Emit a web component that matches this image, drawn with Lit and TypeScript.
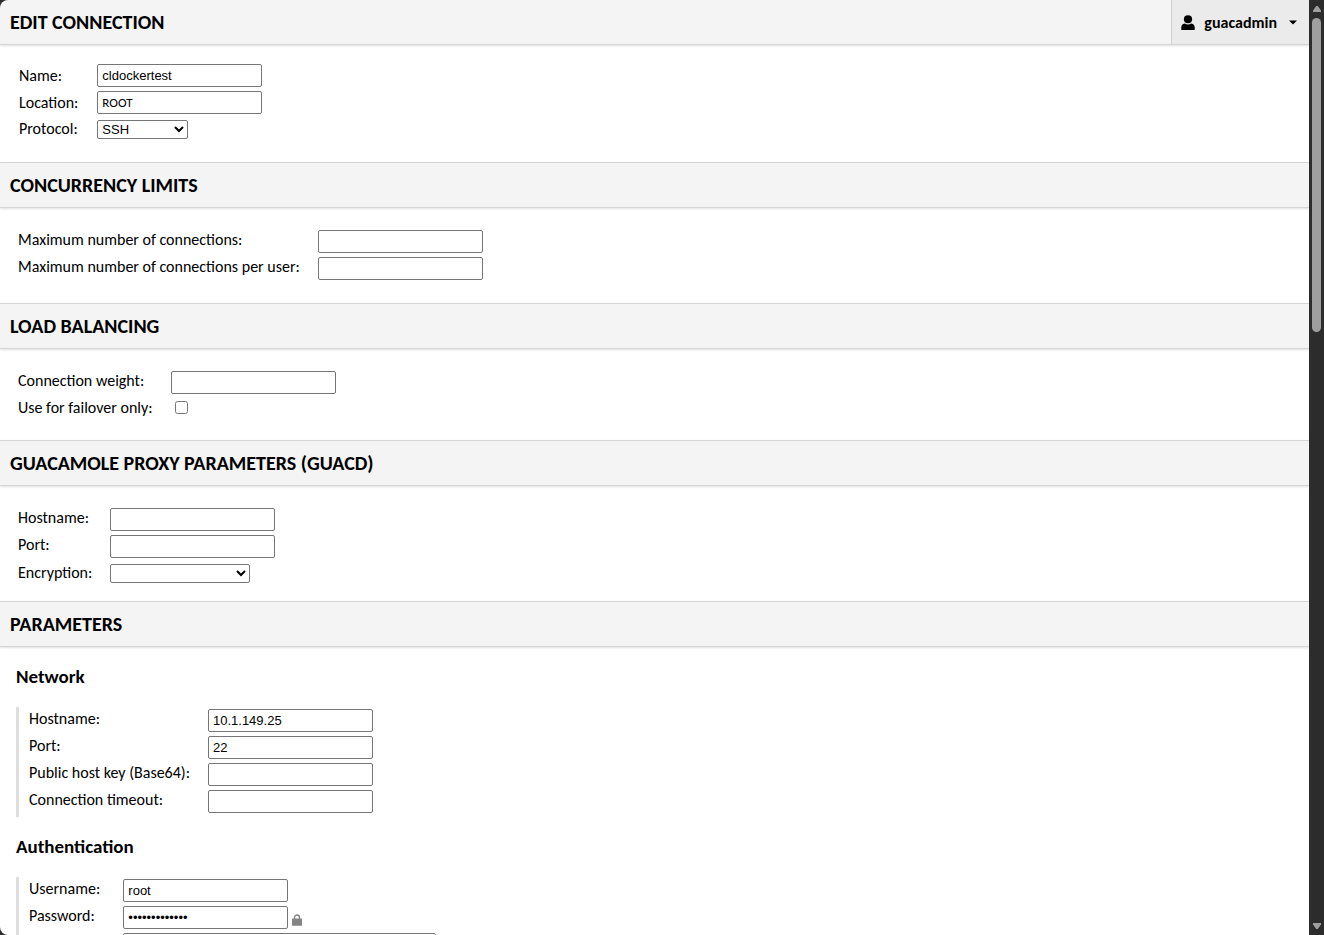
import { LitElement, html, css, nothing } from "lit";
import { customElement, property } from "lit/decorators.js";

type Kind = "text" | "password" | "location" | "select" | "checkbox" | "textarea";

interface Field {
  id: string;
  label: string;
  kind: Kind;
  value?: string;
  wide?: boolean;
}

const text = (id: string, label: string, value = ""): Field => ({ id, label, kind: "text", value });

const CONNECTION: Field[] = [
  text("name", "Name:", "cldockertest"),
  { id: "location", label: "Location:", kind: "location", value: "ROOT" },
  { id: "protocol", label: "Protocol:", kind: "select", value: "SSH" },
];

const CONCURRENCY: Field[] = [
  text("max-connections", "Maximum number of connections:"),
  text("max-connections-per-user", "Maximum number of connections per user:"),
];

const BALANCING: Field[] = [
  text("weight", "Connection weight:"),
  { id: "failover-only", label: "Use for failover only:", kind: "checkbox" },
];

const PROXY: Field[] = [
  text("guacd-hostname", "Hostname:"),
  text("guacd-port", "Port:"),
  { id: "guacd-encryption", label: "Encryption:", kind: "select", wide: true },
];

const NETWORK: Field[] = [
  text("hostname", "Hostname:", "10.1.149.25"),
  text("port", "Port:", "22"),
  text("host-key", "Public host key (Base64):"),
  text("timeout", "Connection timeout:"),
];

const AUTHENTICATION: Field[] = [
  text("username", "Username:", "root"),
  { id: "password", label: "Password:", kind: "password", value: "guacamole-ssh" },
  { id: "private-key", label: "Private key:", kind: "textarea" },
  text("passphrase", "Passphrase:"),
];

@customElement("field-grid")
export class FieldGrid extends LitElement {
  @property({ attribute: false }) fields: Field[] = [];
  @property({ type: Boolean, reflect: true }) centered = false;

  static styles = css`
    :host {
      display: grid;
      grid-template-columns: max-content max-content;
      justify-content: start;
      column-gap: 18px;
      row-gap: 4px;
      font: 16px/20px Carlito, Lato, sans-serif;
    }
    :host([centered]) {
      column-gap: 19px;
    }
    .row {
      display: grid;
      grid-column: 1 / -1;
      grid-template-columns: subgrid;
      align-items: start;
    }
    :host([centered]) .row,
    .row-select,
    .row-checkbox {
      align-items: center;
    }
    .row-select {
      padding-top: 1px;
    }
    .row-checkbox {
      line-height: 19px;
    }
    .row-textarea label {
      padding-top: 4px;
    }
    .control {
      display: flex;
      align-items: center;
      gap: 3px;
    }
    input,
    select,
    textarea {
      box-sizing: border-box;
      margin: 0;
      border: 1px solid #767676;
      border-radius: 2px;
      background-color: #fff;
      color: #000;
      font: 13px/19px "Liberation Sans", Arial, sans-serif;
    }
    .text {
      width: 165px;
      height: 23px;
      padding: 1px 4px;
    }
    .location {
      font: 13px/19px Carlito, Lato, sans-serif;
    }
    select {
      width: 91px;
      height: 19px;
      padding: 0;
      line-height: 17px;
    }
    select.wide {
      width: 140px;
    }
    input[type="checkbox"] {
      width: 13px;
      height: 13px;
      margin: 3px 4px;
    }
    textarea {
      display: block;
      width: 313px;
      height: 160px;
    }
    .lock {
      width: 12px;
      height: 12px;
      margin-top: 4px;
      border: 0;
      padding: 0;
      background: none;
      display: flex;
    }
  `;

  private control(f: Field) {
    switch (f.kind) {
      case "select":
        return html`<select id=${f.id} class=${f.wide ? "wide" : ""}>
          <option>${f.value ?? ""}</option>
        </select>`;
      case "checkbox":
        return html`<input id=${f.id} type="checkbox" />`;
      case "textarea":
        return html`<textarea id=${f.id}></textarea>`;
      case "location":
        return html`<input id=${f.id} class="text location" readonly .value=${f.value ?? ""} />`;
      default:
        return html`<input id=${f.id} class="text" type=${f.kind} .value=${f.value ?? ""} />`;
    }
  }

  render() {
    return this.fields.map(
      (f) => html`<div class="row row-${f.kind}">
        <label for=${f.id}>${f.label}</label>
        <div class="control">
          ${this.control(f)}
          ${f.kind === "password"
            ? html`<button class="lock" aria-label="Show password">
                <svg width="12" height="12" viewBox="0 0 12 12">
                  <path d="M3.5 6V3.5a2.5 2.5 0 0 1 5 0V6" fill="none" stroke="#848484" stroke-width="1.4" />
                  <rect x="1" y="4.6" width="10" height="7.2" rx=".6" fill="#848484" />
                </svg>
              </button>`
            : nothing}
        </div>
      </div>`
    );
  }
}

@customElement("app-root")
export class AppRoot extends LitElement {
  static styles = css`
    :host {
      display: flex;
      height: 100vh;
      background: #2c2c2c;
      color: #000;
      font: 16px/20px Carlito, Lato, sans-serif;
    }
    main {
      flex: 1;
      min-width: 0;
      overflow: hidden auto;
      scrollbar-width: none;
      background: #fff;
      border-radius: 8px 0 0 8px;
    }
    .header {
      display: flex;
      align-items: stretch;
      box-sizing: border-box;
      min-height: 46px;
      border-top: 1px solid #d5d5d5;
      border-bottom: 1px solid #d5d5d5;
      background: #f4f4f4;
      box-shadow: 0 1px 2px rgba(0, 0, 0, 0.12);
    }
    .header.page {
      min-height: 45px;
      border-top: 0;
    }
    h2 {
      flex: 1;
      align-self: center;
      margin: 0;
      padding: 0 10px;
      font-size: 20px;
      line-height: 24px;
      font-weight: 700;
      text-transform: uppercase;
    }
    h3 {
      margin: 0;
      padding: 20px 16px;
      font-size: 19px;
      line-height: 20px;
      font-weight: 700;
    }
    .menu {
      display: flex;
      align-items: center;
      border: 0;
      border-left: 1px solid #d0d0d0;
      padding: 2px 12px 0 9px;
      background: #ebebeb;
      color: #000;
      font: 700 16px/20px Carlito, Lato, sans-serif;
    }
    .user {
      margin-right: 9px;
    }
    .caret {
      margin-left: 12px;
    }
    .body {
      padding: 22px 18px 23px;
    }
    .body.first {
      padding: 19px 19px 23px;
    }
    .body.proxy {
      padding-bottom: 18px;
    }
    .group {
      margin-left: 16px;
      border-left: 3px solid #dedede;
      padding: 2px 10px 4px;
    }
    .scrollbar {
      display: flex;
      flex-direction: column;
      align-items: center;
      width: 15px;
      box-sizing: border-box;
      padding: 6px 0;
    }
    .thumb {
      width: 9px;
      height: 34%;
      margin: 6px 0 auto;
      border-radius: 5px;
      background: #9f9f9f;
    }
    svg {
      display: block;
      flex: none;
    }
  `;

  private heading(title: string) {
    return html`<div class="header"><h2>${title}</h2></div>`;
  }

  render() {
    return html`
      <main>
        <div class="header page">
          <h2>Edit Connection</h2>
          <button class="menu">
            <svg class="user" width="14" height="16" viewBox="0 0 14 16">
              <ellipse cx="7" cy="4.200" rx="4.100" ry="4" />
              <path d="M3.800 8.600C4.800 9.300 5.800 9.600 7 9.600S9.200 9.300 10.200 8.600C12.600 9 13.700 10.300 13.700 12.500V15H.3V12.500C.3 10.300 1.400 9 3.800 8.600Z" />
            </svg>
            guacadmin
            <svg class="caret" width="8" height="6" viewBox="0 0 8 6"><path d="M0 0.500H8L4 4.500Z" /></svg>
          </button>
        </div>
        <div class="body first"><field-grid centered .fields=${CONNECTION}></field-grid></div>
        ${this.heading("Concurrency Limits")}
        <div class="body"><field-grid .fields=${CONCURRENCY}></field-grid></div>
        ${this.heading("Load Balancing")}
        <div class="body"><field-grid .fields=${BALANCING}></field-grid></div>
        ${this.heading("Guacamole Proxy Parameters (guacd)")}
        <div class="body proxy"><field-grid .fields=${PROXY}></field-grid></div>
        ${this.heading("Parameters")}
        <h3>Network</h3>
        <div class="group"><field-grid .fields=${NETWORK}></field-grid></div>
        <h3>Authentication</h3>
        <div class="group"><field-grid .fields=${AUTHENTICATION}></field-grid></div>
      </main>
      <div class="scrollbar" aria-hidden="true">
        <svg width="8" height="6" viewBox="0 0 8 6"><path d="M3.200 0H4.800L8 4.500V6H0V4.500Z" fill="#9f9f9f" /></svg>
        <div class="thumb"></div>
        <svg width="8" height="6" viewBox="0 0 8 6"><path d="M0 0H8V1.500L4.800 6H3.200L0 1.500Z" fill="#9f9f9f" /></svg>
      </div>
    `;
  }
}
